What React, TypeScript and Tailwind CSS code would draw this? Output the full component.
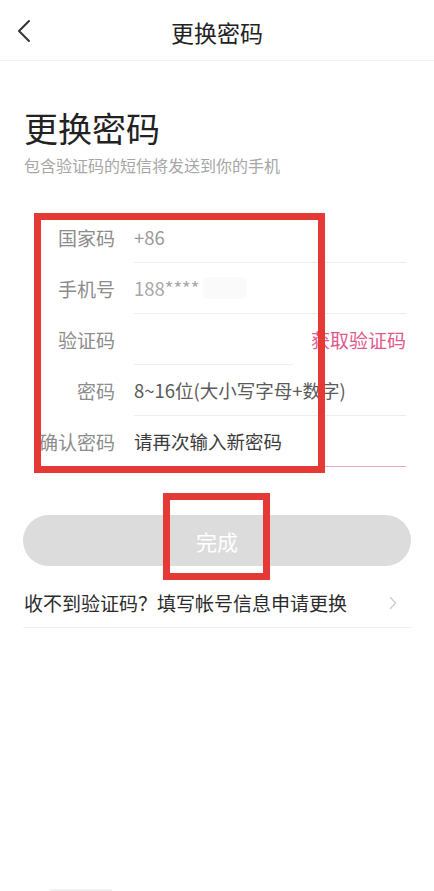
import React from 'react';

type Row = {
  label: string;
  value: string;
  valueClass: string;
};

const rows: Row[] = [
  { label: '国家码', value: '+86', valueClass: 'text-[#9a9a9a]' },
  { label: '手机号', value: '188****', valueClass: 'text-[#a8a8a8]' },
];

function BackIcon() {
  return (
    <svg width="16" height="24" viewBox="0 0 16 24" fill="none">
      <path d="M13 2 L3 12 L13 22" stroke="#333" strokeWidth="2" strokeLinecap="round" strokeLinejoin="round" />
    </svg>
  );
}

function Chevron() {
  return (
    <svg width="8" height="14" viewBox="0 0 8 14" fill="none">
      <path d="M1.5 1.5 L6.5 7 L1.5 12.5" stroke="#cfcfcf" strokeWidth="1.4" strokeLinecap="round" strokeLinejoin="round" />
    </svg>
  );
}

export default function App() {
  return (
    <div className="relative w-[434px] h-[891px] overflow-hidden bg-white font-['Noto_Sans_CJK_SC','Noto_Sans',sans-serif]">
      {/* header */}
      <div className="grid grid-cols-[60px_1fr_60px] h-[61px] items-center border-b border-[#f3f3f3]">
        <div className="pl-[16px] pt-[2px] flex items-center">
          <BackIcon />
        </div>
        <div className="pt-[3px] text-center text-[23px] leading-[30px] text-[#222]">更换密码</div>
        <div />
      </div>

      {/* title */}
      <div className="px-[24px] mt-[47px]">
        <div className="text-[34px] leading-[40px] text-[#222]">更换密码</div>
        <div className="mt-[7px] text-[16px] leading-[20px] text-[#a6a6a6]">包含验证码的短信将发送到你的手机</div>
      </div>

      {/* form */}
      <div className="mt-[37px] pl-[24px] pr-[28px]">
        {rows.map((r) => (
          <div key={r.label} className="flex h-[51px]">
            <div className="w-[91px] flex items-center justify-end text-[19px] leading-[24px] text-[#8c8c8c]">{r.label}</div>
            <div className={`ml-[19px] flex-1 flex items-center border-b border-[#eeeeee] text-[18.5px] leading-[24px] ${r.valueClass}`}>
              {r.value}
              {r.label === '手机号' && <span className="ml-[4px] w-[44px] h-[22px] rounded-[6px] bg-[#fafafa]" />}
            </div>
          </div>
        ))}
        <div className="flex h-[51px]">
          <div className="w-[91px] flex items-center justify-end text-[19px] leading-[24px] text-[#8c8c8c]">验证码</div>
          <div className="ml-[19px] w-[159px] border-b border-[#eeeeee]" />
          <div className="flex-1 flex items-center justify-end text-[19px] leading-[24px] text-[#e2588c]">获取验证码</div>
        </div>
        <div className="flex h-[51px]">
          <div className="w-[91px] flex items-center justify-end text-[19px] leading-[24px] text-[#8c8c8c]">密码</div>
          <div className="ml-[19px] flex-1 flex items-center border-b border-[#eeeeee] text-[18.5px] leading-[24px] text-[#5a5a5a]">
            8~16位(大小写字母+数字)
          </div>
        </div>
        <div className="flex h-[51px]">
          <div className="w-[91px] flex items-center justify-end text-[19px] leading-[24px] text-[#8c8c8c] whitespace-nowrap">确认密码</div>
          <div className="ml-[19px] flex-1 flex items-center border-b border-[#e9a9b9] text-[18.5px] leading-[24px] text-[#3c3c3c]">
            请再次输入新密码
          </div>
        </div>
      </div>

      {/* submit */}
      <div className="px-[23px] mt-[48px]">
        <button className="w-full h-[51px] rounded-full bg-[#dcdcdc] text-white text-[21px] leading-[26px]">完成</button>
      </div>

      <div className="mx-[23px] mt-[13px] h-[49px] flex items-center justify-between border-b border-[#f0f0f0]">
        <span className="pl-[1px] text-[19px] leading-[24px] text-[#2b2b2b]">收不到验证码？填写帐号信息申请更换</span>
        <span className="pr-[14px] flex items-center">
          <Chevron />
        </span>
      </div>

      {/* annotation boxes */}
      <div className="absolute left-[34px] top-[213px] w-[291px] h-[260px] border-[7px] border-[#e53935]" />
      <div className="absolute left-[163px] top-[493px] w-[107px] h-[87px] border-[7px] border-[#e53935]" />

      <div className="absolute left-[50px] bottom-0 w-[62px] h-[2px] bg-[#f2f2f2]" />
    </div>
  );
}
